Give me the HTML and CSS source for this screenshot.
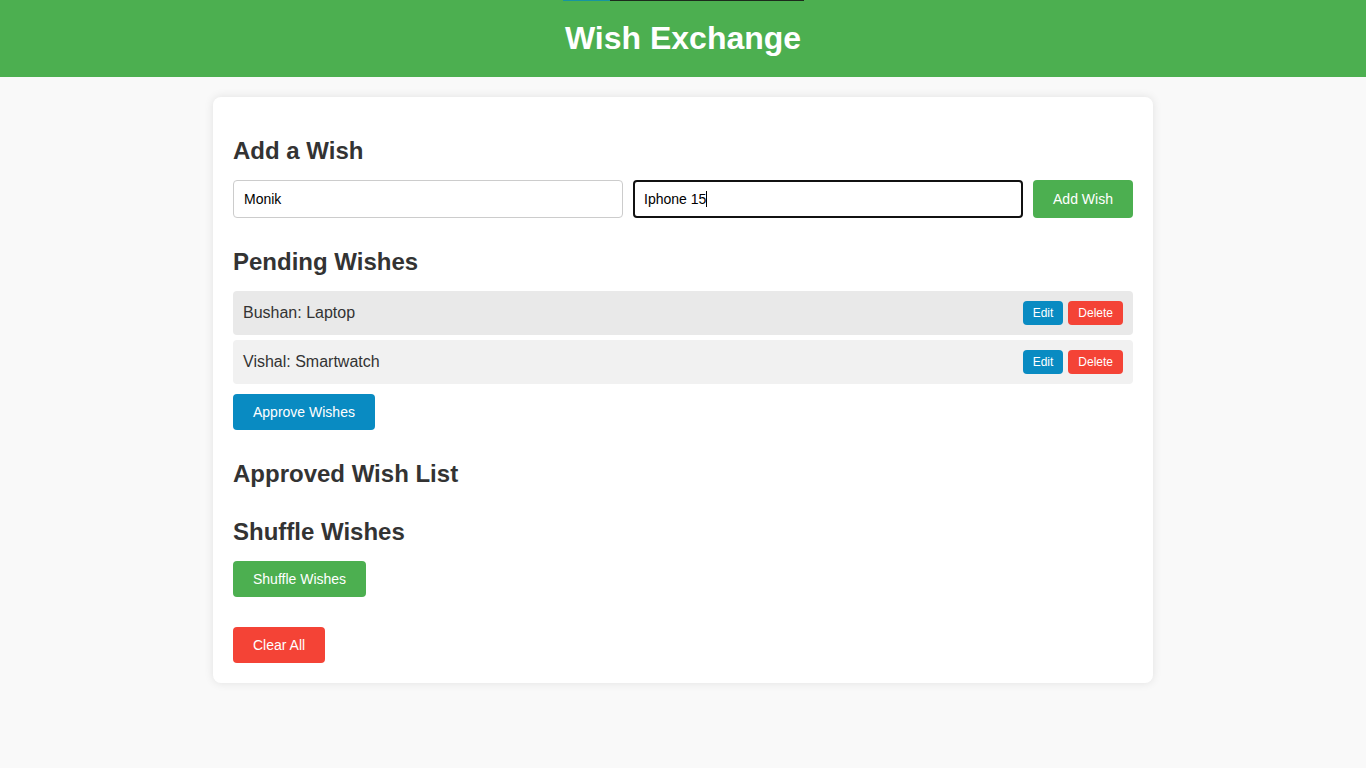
FILE: index.html
```html
<!DOCTYPE html>
<html lang="en">
<head>
<meta charset="utf-8">
<title>Wish Exchange</title>
<link rel="stylesheet" href="styles.css">
</head>
<body>
<div class="topline"><span class="seg-teal"></span><span class="seg-dark"></span></div>
<header class="header">
  <h1 class="title">Wish Exchange</h1>
</header>
<main class="card">
  <section class="section first">
    <h2 class="heading">Add a Wish</h2>
    <div class="form-row">
      <div class="field" role="textbox">Monik</div>
      <div class="field focused" role="textbox">Iphone 15<span class="caret"></span></div>
      <button class="btn btn-green btn-add">Add Wish</button>
    </div>
  </section>
  <section class="section">
    <h2 class="heading">Pending Wishes</h2>
    <ul class="wish-list">
      <li class="wish-item hover"><span>Bushan: Laptop</span>
        <div class="actions"><button class="btn-sm btn-blue">Edit</button><button class="btn-sm btn-red">Delete</button></div>
      </li>
      <li class="wish-item"><span>Vishal: Smartwatch</span>
        <div class="actions"><button class="btn-sm btn-blue">Edit</button><button class="btn-sm btn-red">Delete</button></div>
      </li>
    </ul>
    <button class="btn btn-blue btn-approve">Approve Wishes</button>
  </section>
  <section class="section">
    <h2 class="heading">Approved Wish List</h2>
    <ul class="wish-list"></ul>
  </section>
  <section class="section">
    <h2 class="heading">Shuffle Wishes</h2>
    <button class="btn btn-green">Shuffle Wishes</button>
  </section>
  <section class="section">
    <button class="btn btn-red">Clear All</button>
  </section>
</main>
</body>
</html>
```

FILE: styles.css
```css
* { box-sizing: border-box; }

body {
  margin: 0;
  font-family: "Liberation Sans", Arial, sans-serif;
  background: #f9f9f9;
  color: #333;
}

.topline {
  position: absolute;
  top: 0;
  left: 563px;
  display: flex;
  height: 1px;
  z-index: 2;
}
.seg-teal { width: 47px; background: #1695a0; }
.seg-dark { width: 194px; background: #1c2a1c; }

.header {
  background: #4caf50;
  padding: 20px;
  text-align: center;
}

.title {
  margin: 0;
  color: #fff;
  font-size: 32px;
  font-weight: bold;
}

.card {
  width: 940px;
  margin: 20px auto;
  padding: 20px;
  background: #fff;
  border-radius: 8px;
  box-shadow: 0 0 10px rgba(0, 0, 0, 0.1);
  display: flex;
  flex-direction: column;
}

.section {
  display: flex;
  flex-direction: column;
  align-items: flex-start;
  margin-top: 30px;
}
.section.first { margin-top: 20px; }

.heading {
  margin: 0;
  font-size: 24px;
  line-height: 28px;
  font-weight: bold;
  color: #333;
}

.form-row {
  display: flex;
  gap: 10px;
  width: 100%;
}

.field {
  flex: 1;
  height: 38px;
  padding: 10px;
  border: 1px solid #ccc;
  border-radius: 4px;
  font-size: 14px;
  line-height: 16px;
  color: #000;
  background: #fff;
  display: flex;
  align-items: center;
}
.field.focused {
  border: 2px solid #111;
  padding: 9px;
}
.caret {
  display: inline-block;
  width: 1px;
  height: 16px;
  background: #000;
}

.btn {
  border: none;
  border-radius: 4px;
  padding: 10px 20px;
  font-family: inherit;
  font-size: 14px;
  line-height: 16px;
  color: #fff;
  cursor: pointer;
}
.btn-add { width: 100px; height: 38px; padding: 0; }

.btn-green { background: #4caf50; }
.btn-blue { background: #098bc2; }
.btn-red { background: #f44336; }

.wish-list {
  list-style: none;
  margin: 0;
  padding: 0;
  width: 100%;
  display: flex;
  flex-direction: column;
  gap: 5px;
}
.wish-list:empty { display: none; }

.section > * + * { margin-top: 15px; }
.section > .btn-approve { margin-top: 10px; }

.wish-item {
  display: flex;
  align-items: center;
  justify-content: space-between;
  padding: 10px;
  background: #f1f1f1;
  border-radius: 4px;
  font-size: 16px;
  color: #333;
}
.wish-item.hover { background: #e9e9e9; }

.actions {
  display: flex;
  gap: 5px;
}

.btn-sm {
  border: none;
  border-radius: 4px;
  padding: 5px 10px;
  font-family: inherit;
  font-size: 12px;
  line-height: 14px;
  color: #fff;
  cursor: pointer;
}
```
